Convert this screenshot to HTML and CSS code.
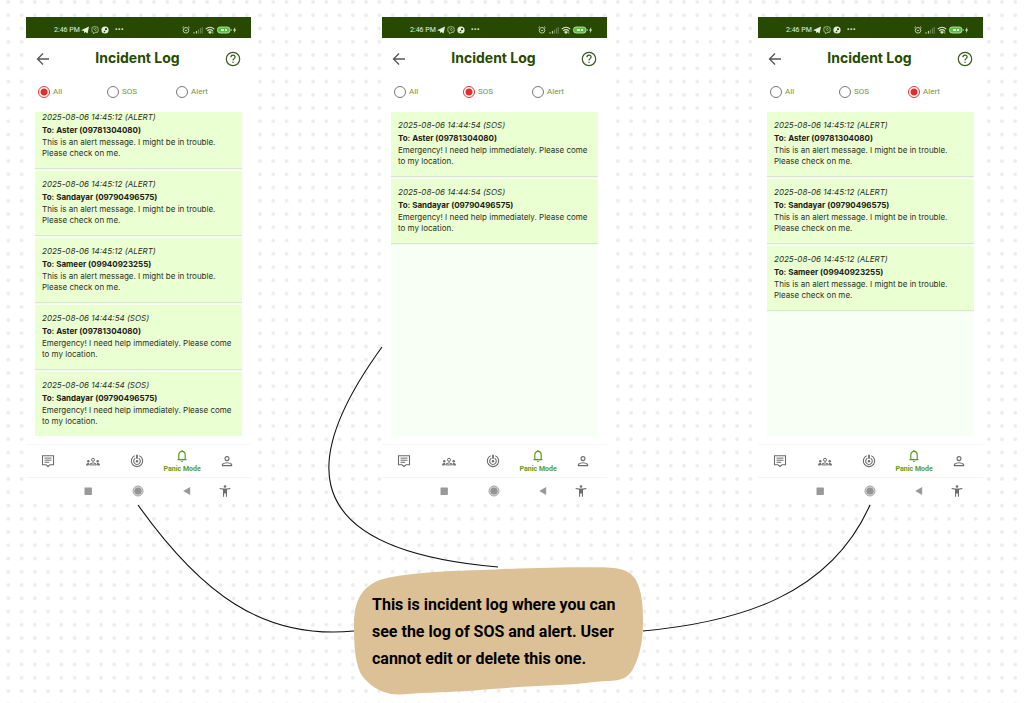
FILE: index.html
```
<!DOCTYPE html>
<html lang="en">
<head>
<meta charset="utf-8">
<meta name="viewport" content="width=device-width, initial-scale=1">
<title>Incident Log</title>
<link rel="stylesheet" href="styles.css">
</head>
<body>
<svg class="symbols" aria-hidden="true">
  <symbol id="i-apps" viewBox="0 0 28 8">
    <path d="M0 4.3 8 .6 6.6 7.4 4.4 5.9 3.2 7.2 3 5z" fill="#e6efdf"/>
    <path d="M11.2 1.2q2.8-1 5.6 0 .9 2.800 0 5l-2.800.4-1.500 1.200v-1.500l-1.300-.4q-.9-2.600 0-4.700z" fill="none" stroke="#b4c6a5" stroke-width=".8"/>
    <path d="M12.800 2.300q.5 2.300 2.700 3M14 2.200q1.300.2 1.400 1.500" fill="none" stroke="#b4c6a5" stroke-width=".7"/>
    <circle cx="24" cy="4" r="3.600" fill="#e6efdf"/>
    <path d="M24 4V2.200h2V4z" fill="#274a00"/>
    <path d="M22.800 6.600V4.800h1.700q0 1.600-1.700 1.800z" fill="#274a00"/>
  </symbol>
  <symbol id="i-alarm" viewBox="0 0 8 8">
    <circle cx="4" cy="4.300" r="2.800" fill="none" stroke="#cbd8c0" stroke-width=".9"/>
    <path d="M.4 1.800 1.900.6M7.600 1.800 6.100.6M2.800 3.800 4 5l1.300-1.200" fill="none" stroke="#cbd8c0" stroke-width=".9"/>
  </symbol>
  <symbol id="i-signal" viewBox="0 0 10 8">
    <path d="M1 7.500V6.200M3.500 7.500V5" stroke="#c5d3b9" stroke-width="1.200"/>
    <path d="M5.600 7.500V3.600M7.400 7.500V2.200M9.200 7.500V1" stroke="#6f8957" stroke-width="1"/>
  </symbol>
  <symbol id="i-wifi" viewBox="0 0 10 8">
    <path d="M.7 3.100q4.300-3.800 8.600 0M2.200 4.800q2.800-2.400 5.600 0" fill="none" stroke="#dce6d3" stroke-width="1.100"/>
    <path d="M3.400 6q1.600-1.300 3.200 0L5 7.700zM7.800 5.200v2.600" fill="#dce6d3" stroke="#dce6d3" stroke-width=".6"/>
  </symbol>
  <symbol id="i-battery" viewBox="0 0 20 8">
    <rect x=".5" y="1" width="12.500" height="6" rx="2.600" fill="#4fc237" stroke="#d4e6ca" stroke-width=".8"/>
    <path d="M4 4h3M8 4h2" stroke="#e3f5dc" stroke-width="2"/>
    <path d="M14.200 3v2" stroke="#b8cca9" stroke-width=".8"/>
    <path d="M18.300.9 16 4.500h1.400L16.800 7.200 19.300 3.600h-1.500z" fill="#dce6d3"/>
  </symbol>
  <symbol id="i-back" viewBox="0 0 14 14">
    <path d="M13 7H1.500M7 1.500 1.500 7 7 12.500" fill="none" stroke="#555" stroke-width="1.300"/>
  </symbol>
  <symbol id="i-help" viewBox="0 0 16 16">
    <circle cx="8" cy="8" r="6.700" fill="none" stroke="#3d5a20" stroke-width="1.200"/>
    <path d="M5.900 6.300q0-2.100 2.100-2.100t2.100 1.900c0 1.500-2.100 1.600-2.100 3.300M8 10.700v1.300" fill="none" stroke="#3d5a20" stroke-width="1.200"/>
  </symbol>
  <symbol id="i-message" viewBox="0 0 14 14">
    <path d="M1.500 1.700h11v9.100H9L7 12.500 5 10.800H1.500z" fill="none" stroke="#6b6b6b" stroke-width="1.100"/>
    <path d="M3.500 4.100h7M3.500 6.200h7M3.500 8.300h4.700" stroke="#6b6b6b"/>
  </symbol>
  <symbol id="i-group" viewBox="0 0 14 14">
    <circle cx="7" cy="5.800" r="1.500" fill="none" stroke="#6b6b6b"/>
    <path d="M3.800 10.900V10Q7 7.500 10.200 10v.9z" fill="none" stroke="#6b6b6b"/>
    <circle cx="2.300" cy="7.200" r="1.200" fill="#6b6b6b"/><circle cx="11.700" cy="7.200" r="1.200" fill="#6b6b6b"/>
    <path d="M.2 11.400V10q1.200-1.200 3-.9l-.6 2.300zM13.800 11.400V10q-1.200-1.200-3-.9l.6 2.300z" fill="#6b6b6b"/>
  </symbol>
  <symbol id="i-track" viewBox="0 0 14 14">
    <path d="M4.700 1.700a5.700 5.700 0 1 0 4.600 0M5.300 4.300a3.300 3.300 0 1 0 3.400 0" fill="none" stroke="#6b6b6b" stroke-width="1.100"/>
    <path d="M7 .8v4" stroke="#6b6b6b" stroke-width="1.800"/><circle cx="7" cy="7.200" r="1.200" fill="#6b6b6b"/>
  </symbol>
  <symbol id="i-bell" viewBox="0 0 14 14">
    <path d="M2.500 10.700h9M3.800 10.700V6c0-2.200 1.300-3.600 3.200-3.600S10.200 3.800 10.200 6v4.700M7 2.400V.9" fill="none" stroke="#5c9a1c" stroke-width="1.200"/>
    <path d="M5.600 11.700h2.800L7 13.200z" fill="#5c9a1c"/>
  </symbol>
  <symbol id="i-person" viewBox="0 0 14 14">
    <circle cx="7" cy="4.600" r="2" fill="none" stroke="#6b6b6b" stroke-width="1.100"/>
    <path d="M2.400 11.600V10.200Q7 7.300 11.600 10.200v1.400z" fill="none" stroke="#6b6b6b" stroke-width="1.100"/>
  </symbol>
  <symbol id="i-square" viewBox="0 0 12 12"><rect x="2.500" y="2.500" width="7.400" height="7.400" rx=".6" fill="#999"/></symbol>
  <symbol id="i-home" viewBox="0 0 12 12"><circle cx="6" cy="6" r="5" fill="#d8d8d8" stroke="#a5a5a5"/><circle cx="6" cy="6" r="3.600" fill="#949494"/></symbol>
  <symbol id="i-tri" viewBox="0 0 12 12"><path d="M2.200 6 9.200 2v8z" fill="#999"/></symbol>
  <symbol id="i-access" viewBox="0 0 12 12">
    <circle cx="6" cy="1.500" r="1.300" fill="#6f6f6f"/>
    <path d="M.7 2.900 4.500 3.400h3l3.800-.5.1 1-3.400.8v7.100H6.900V8.500H5.100v3.300H4V4.700L.6 3.900z" fill="#6f6f6f"/>
  </symbol>
</svg>

<main class="board">
  <svg class="grid-dots" aria-hidden="true">
    <defs><pattern id="dots" x="1.700" y="-4.600" width="13.250" height="13.250" patternUnits="userSpaceOnUse"><circle cx="6.600" cy="6.600" r="1.900" fill="#ebecf1"/></pattern></defs>
    <rect width="100%" height="100%" fill="url(#dots)"/>
  </svg>

  <section class="phone phone-all">
    <div class="status"><span>2:46 PM</span><svg class="apps"><use href="#i-apps"/></svg><span class="more">···</span>
      <svg class="alarm"><use href="#i-alarm"/></svg><svg class="signal"><use href="#i-signal"/></svg><svg class="signal"><use href="#i-wifi"/></svg><svg class="battery"><use href="#i-battery"/></svg></div>
    <header class="bar"><button type="button" aria-label="Back"><svg class="i14"><use href="#i-back"/></svg></button><h2>Incident Log</h2><button type="button" aria-label="Help"><svg class="i16"><use href="#i-help"/></svg></button></header>
    <form class="filters">
      <label><input type="radio" name="filter" checked>All</label>
      <label><input type="radio" name="filter">SOS</label>
      <label><input type="radio" name="filter">Alert</label>
    </form>
    <div class="log scrolled">
      <article class="entry"><time>2025-08-06 14:45:12 (ALERT)</time><h3>To: Aster (09781304080)</h3><p>This is an alert message. I might be in trouble.<br>Please check on me.</p></article>
      <article class="entry"><time>2025-08-06 14:45:12 (ALERT)</time><h3>To: Sandayar (09790496575)</h3><p>This is an alert message. I might be in trouble.<br>Please check on me.</p></article>
      <article class="entry"><time>2025-08-06 14:45:12 (ALERT)</time><h3>To: Sameer (09940923255)</h3><p>This is an alert message. I might be in trouble.<br>Please check on me.</p></article>
      <article class="entry"><time>2025-08-06 14:44:54 (SOS)</time><h3>To: Aster (09781304080)</h3><p>Emergency! I need help immediately. Please come<br>to my location.</p></article>
      <article class="entry"><time>2025-08-06 14:44:54 (SOS)</time><h3>To: Sandayar (09790496575)</h3><p>Emergency! I need help immediately. Please come<br>to my location.</p></article>
    </div>
    <nav class="tabs"><button type="button" aria-label="Messages"><svg class="i14"><use href="#i-message"/></svg></button><button type="button" aria-label="Groups"><svg class="i14"><use href="#i-group"/></svg></button><button type="button" aria-label="Tracking"><svg class="i14"><use href="#i-track"/></svg></button><button type="button" class="active"><svg class="i14"><use href="#i-bell"/></svg>Panic Mode</button><button type="button" aria-label="Profile"><svg class="i14"><use href="#i-person"/></svg></button></nav>
    <div class="system"><button type="button" aria-label="Recents"><svg class="i12"><use href="#i-square"/></svg></button><button type="button" aria-label="Home"><svg class="i12"><use href="#i-home"/></svg></button><button type="button" aria-label="System back"><svg class="i12"><use href="#i-tri"/></svg></button><button type="button" aria-label="Accessibility"><svg class="i12"><use href="#i-access"/></svg></button></div>
  </section>

  <section class="phone phone-sos">
    <div class="status"><span>2:46 PM</span><svg class="apps"><use href="#i-apps"/></svg><span class="more">···</span>
      <svg class="alarm"><use href="#i-alarm"/></svg><svg class="signal"><use href="#i-signal"/></svg><svg class="signal"><use href="#i-wifi"/></svg><svg class="battery"><use href="#i-battery"/></svg></div>
    <header class="bar"><button type="button" aria-label="Back"><svg class="i14"><use href="#i-back"/></svg></button><h2>Incident Log</h2><button type="button" aria-label="Help"><svg class="i16"><use href="#i-help"/></svg></button></header>
    <form class="filters">
      <label><input type="radio" name="filter">All</label>
      <label><input type="radio" name="filter" checked>SOS</label>
      <label><input type="radio" name="filter">Alert</label>
    </form>
    <div class="log">
      <article class="entry"><time>2025-08-06 14:44:54 (SOS)</time><h3>To: Aster (09781304080)</h3><p>Emergency! I need help immediately. Please come<br>to my location.</p></article>
      <article class="entry"><time>2025-08-06 14:44:54 (SOS)</time><h3>To: Sandayar (09790496575)</h3><p>Emergency! I need help immediately. Please come<br>to my location.</p></article>
    </div>
    <nav class="tabs"><button type="button" aria-label="Messages"><svg class="i14"><use href="#i-message"/></svg></button><button type="button" aria-label="Groups"><svg class="i14"><use href="#i-group"/></svg></button><button type="button" aria-label="Tracking"><svg class="i14"><use href="#i-track"/></svg></button><button type="button" class="active"><svg class="i14"><use href="#i-bell"/></svg>Panic Mode</button><button type="button" aria-label="Profile"><svg class="i14"><use href="#i-person"/></svg></button></nav>
    <div class="system"><button type="button" aria-label="Recents"><svg class="i12"><use href="#i-square"/></svg></button><button type="button" aria-label="Home"><svg class="i12"><use href="#i-home"/></svg></button><button type="button" aria-label="System back"><svg class="i12"><use href="#i-tri"/></svg></button><button type="button" aria-label="Accessibility"><svg class="i12"><use href="#i-access"/></svg></button></div>
  </section>

  <section class="phone phone-alert">
    <div class="status"><span>2:46 PM</span><svg class="apps"><use href="#i-apps"/></svg><span class="more">···</span>
      <svg class="alarm"><use href="#i-alarm"/></svg><svg class="signal"><use href="#i-signal"/></svg><svg class="signal"><use href="#i-wifi"/></svg><svg class="battery"><use href="#i-battery"/></svg></div>
    <header class="bar"><button type="button" aria-label="Back"><svg class="i14"><use href="#i-back"/></svg></button><h2>Incident Log</h2><button type="button" aria-label="Help"><svg class="i16"><use href="#i-help"/></svg></button></header>
    <form class="filters">
      <label><input type="radio" name="filter">All</label>
      <label><input type="radio" name="filter">SOS</label>
      <label><input type="radio" name="filter" checked>Alert</label>
    </form>
    <div class="log">
      <article class="entry"><time>2025-08-06 14:45:12 (ALERT)</time><h3>To: Aster (09781304080)</h3><p>This is an alert message. I might be in trouble.<br>Please check on me.</p></article>
      <article class="entry"><time>2025-08-06 14:45:12 (ALERT)</time><h3>To: Sandayar (09790496575)</h3><p>This is an alert message. I might be in trouble.<br>Please check on me.</p></article>
      <article class="entry"><time>2025-08-06 14:45:12 (ALERT)</time><h3>To: Sameer (09940923255)</h3><p>This is an alert message. I might be in trouble.<br>Please check on me.</p></article>
    </div>
    <nav class="tabs"><button type="button" aria-label="Messages"><svg class="i14"><use href="#i-message"/></svg></button><button type="button" aria-label="Groups"><svg class="i14"><use href="#i-group"/></svg></button><button type="button" aria-label="Tracking"><svg class="i14"><use href="#i-track"/></svg></button><button type="button" class="active"><svg class="i14"><use href="#i-bell"/></svg>Panic Mode</button><button type="button" aria-label="Profile"><svg class="i14"><use href="#i-person"/></svg></button></nav>
    <div class="system"><button type="button" aria-label="Recents"><svg class="i12"><use href="#i-square"/></svg></button><button type="button" aria-label="Home"><svg class="i12"><use href="#i-home"/></svg></button><button type="button" aria-label="System back"><svg class="i12"><use href="#i-tri"/></svg></button><button type="button" aria-label="Accessibility"><svg class="i12"><use href="#i-access"/></svg></button></div>
  </section>

  <svg class="links" aria-hidden="true">
    <g fill="none" stroke="#111" stroke-width="1.100">
      <path d="M138 505C200 592 262 640 354 631"/>
      <path d="M382 347C313 442 276 548 498 567"/>
      <path d="M870 505C830 595 740 622 643 631"/>
    </g>
  </svg>

  <aside class="note">
    <svg class="blob" viewBox="354 567 289 128" preserveAspectRatio="none" aria-hidden="true">
      <path d="M354 625C354 600 362 583 389 577.500C420 571.500 455 571 496 569.500C535 567.500 570 567 600 567.200C620 567.500 630 570 636 580C642 592 643 605 643 622C643 645 638 660 633 669C628 678 622 680.500 608 681C590 681.500 585 684 568 684.500C535 686 500 688 474 690.500C450 692.500 430 692 400 694.500C385 695 372 688 363 677C355 666 354 645 354 625Z" fill="#ddc196"/>
    </svg>
    <p>This is incident log where you can<br>see the log of SOS and alert. User<br>cannot edit or delete this one.</p>
  </aside>
</main>
</body>
</html>
```
FILE: styles.css
```
* { box-sizing: border-box; }
body { margin: 0; background: #fff; font-family: Inter, "Noto Sans", sans-serif; }
h2, h3, p { margin: 0; }
button { border: 0; padding: 0; background: none; font: inherit; color: inherit; display: flex; align-items: center; justify-content: center; }
svg { display: block; flex: none; }
.symbols { position: absolute; width: 0; height: 0; }
.i12 { width: 12px; height: 12px; }
.i14 { width: 14px; height: 14px; }
.i16 { width: 16px; height: 16px; }

/* free canvas with the screens, connectors and note placed on it */
.board { position: relative; min-height: 100vh; overflow: hidden; }
.grid-dots, .links { position: absolute; inset: 0; width: 100%; height: 100%; pointer-events: none; }
.phone { position: absolute; top: 17px; width: 225px; background: #fff; }
.phone-all { left: 26px; }
.phone-sos { left: 382px; }
.phone-alert { left: 758px; }

.status { display: flex; align-items: center; height: 21px; padding: 4px 14px 0 28px; background: #274a00; color: #e6efdf; font: 7px/12px Roboto, sans-serif; }
.apps { width: 28px; height: 8px; margin-left: 1px; }
.more { margin: 0 auto 0 6px; font-size: 10px; font-weight: 700; }
.alarm { width: 8px; height: 8px; margin-right: 3px; }
.signal { width: 10px; height: 8px; margin-right: 2px; }
.battery { width: 20px; height: 8px; }

.bar { display: flex; align-items: center; justify-content: space-between; height: 41px; padding: 0 10px; }
.bar h2 { padding-bottom: 2px; font-size: 14px; line-height: 20px; font-weight: 700; color: #274a00; }

.filters { display: grid; grid-template-columns: repeat(3, 1fr); padding: 6px 6px 14px 12px; }
.filters label { display: flex; align-items: center; gap: 3px; color: #719344; font: 8px/13px Roboto, sans-serif; }
.filters input { appearance: none; width: 12px; height: 12px; margin: 0; border: 1px solid #777; border-radius: 50%; }
.filters input:checked { border-color: #e03838; background: radial-gradient(circle, #e02d2d 3px, #fff 4px); }

.log { display: flex; flex-direction: column; gap: 3px; height: 324px; margin: 0 9px; background: #f8fff4; overflow: hidden; }
.log.scrolled { justify-content: flex-end; }
.entry { flex: none; padding: 7px 7px 9px; background: #eaffd2; box-shadow: 0 1px 1px #d9e5cd; color: #2b3024; font-size: 8px; line-height: 11px; white-space: nowrap; }
.entry time { display: block; line-height: 12px; font-style: italic; }
.entry h3 { font-size: 8px; line-height: 14px; font-weight: 700; color: #1c2018; }

.tabs { display: grid; grid-template-columns: repeat(5, 1fr); height: 33px; margin-top: 8px; padding-right: 2px; border-top: 1px solid #f6f6f6; }
.tabs .active { flex-direction: column; gap: 1px; color: #5c9a1c; font: 700 7px/10px Roboto, sans-serif; white-space: nowrap; }
.system { display: grid; grid-template-columns: 50fr 50fr 48fr 28fr; height: 27px; padding: 0 12px 0 37px; border-top: 1px solid #f4f4f4; }

.note { position: absolute; left: 354px; top: 567px; width: 289px; padding: 24px 18px; }
.note p { position: relative; font: 700 16px/27px Roboto, sans-serif; color: #000; white-space: nowrap; }
.blob { position: absolute; left: 0; top: 0; width: 100%; height: 128px; }
```
